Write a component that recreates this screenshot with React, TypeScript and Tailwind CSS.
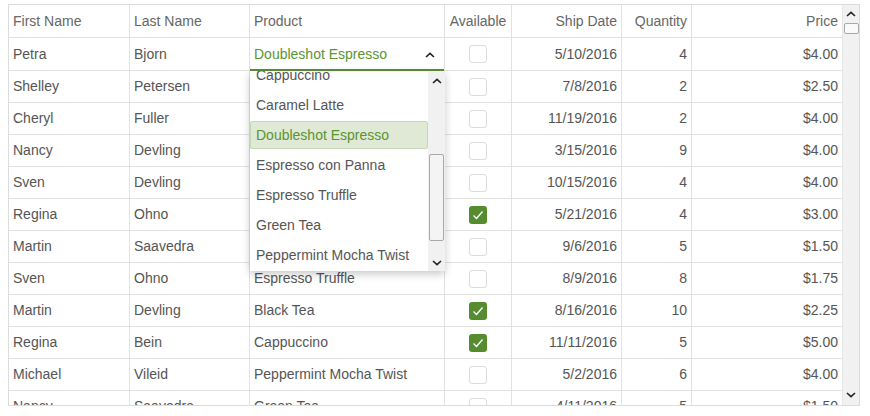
import React from 'react';

type Row = { first: string; last: string; product: string; available: boolean; date: string; qty: number; price: string };

const ROWS: Row[] = [
  { first: 'Petra',   last: 'Bjorn',    product: 'Doubleshot Espresso',    available: false, date: '5/10/2016',  qty: 4,  price: '$4.00' },
  { first: 'Shelley', last: 'Petersen', product: 'Caramel Latte',          available: false, date: '7/8/2016',   qty: 2,  price: '$2.50' },
  { first: 'Cheryl',  last: 'Fuller',   product: 'Green Tea',              available: false, date: '11/19/2016', qty: 2,  price: '$4.00' },
  { first: 'Nancy',   last: 'Devling',  product: 'Espresso con Panna',     available: false, date: '3/15/2016',  qty: 9,  price: '$4.00' },
  { first: 'Sven',    last: 'Devling',  product: 'Black Tea',              available: false, date: '10/15/2016', qty: 4,  price: '$4.00' },
  { first: 'Regina',  last: 'Ohno',     product: 'Cappuccino',             available: true,  date: '5/21/2016',  qty: 4,  price: '$3.00' },
  { first: 'Martin',  last: 'Saavedra', product: 'Caramel Latte',          available: false, date: '9/6/2016',   qty: 5,  price: '$1.50' },
  { first: 'Sven',    last: 'Ohno',     product: 'Espresso Truffle',       available: false, date: '8/9/2016',   qty: 8,  price: '$1.75' },
  { first: 'Martin',  last: 'Devling',  product: 'Black Tea',              available: true,  date: '8/16/2016',  qty: 10, price: '$2.25' },
  { first: 'Regina',  last: 'Bein',     product: 'Cappuccino',             available: true,  date: '11/11/2016', qty: 5,  price: '$5.00' },
  { first: 'Michael', last: 'Vileid',   product: 'Peppermint Mocha Twist', available: false, date: '5/2/2016',   qty: 6,  price: '$4.00' },
  { first: 'Nancy',   last: 'Saavedra', product: 'Green Tea',              available: false, date: '4/11/2016',  qty: 5,  price: '$1.50' },
];

const PRODUCTS = [
  'Cappuccino',
  'Caramel Latte',
  'Doubleshot Espresso',
  'Espresso con Panna',
  'Espresso Truffle',
  'Green Tea',
  'Peppermint Mocha Twist',
];

const COLS = 'grid grid-cols-[121px_120px_195px_67px_110px_70px_150px]';
const CELL = 'px-[4px] border-r border-b border-[#e2e2e2] flex items-center overflow-hidden whitespace-nowrap';

function Chevron({ up, className }: { up?: boolean; className?: string }) {
  return (
    <svg width="10" height="6" viewBox="0 0 10 6" className={className}>
      <polyline
        points={up ? '1,5 5,1.3 9,5' : '1,1 5,4.7 9,1'}
        fill="none"
        stroke="#222"
        strokeWidth="1.6"
      />
    </svg>
  );
}

function CheckBox({ checked }: { checked: boolean }) {
  if (checked) {
    return (
      <div className="w-[18px] h-[18px] rounded-[3px] bg-[#548c2f] flex items-center justify-center">
        <svg width="14" height="14" viewBox="0 0 14 14">
          <polyline points="2.5,7.5 5.5,10.5 11.5,3.5" fill="none" stroke="#fff" strokeWidth="1.4" />
        </svg>
      </div>
    );
  }
  return <div className="w-[18px] h-[18px] rounded-[3px] border border-[#dcdcdc] bg-white" />;
}

function Dropdown() {
  return (
    <div className="absolute left-0 top-full w-[195px] h-[200px] bg-white z-10 shadow-[0_3px_8px_rgba(0,0,0,0.22)] overflow-hidden flex">
      <div className="flex-1 overflow-hidden">
        <div className="-mt-[11px]">
          {PRODUCTS.map(p => {
            const sel = p === 'Doubleshot Espresso';
            return (
              <div key={p} className="h-[30px] py-px">
                <div
                  className={
                    sel
                      ? 'h-[28px] flex items-center pl-[5px] border border-[#c4d8b3] bg-[#dfe9d5] rounded-[2px] text-[#5b9431]'
                      : 'h-[28px] flex items-center pl-[6px] text-[#555]'
                  }
                >
                  {p}
                </div>
              </div>
            );
          })}
        </div>
      </div>
      <div className="w-[17px] bg-[#f1f1f1] flex flex-col items-center">
        <div className="h-[17px] flex items-center justify-center mt-px">
          <Chevron up />
        </div>
        <div className="mt-[65px] w-[15px] h-[87px] rounded-[2px] border border-[#a8a8a8] bg-[#f4f4f4]" />
        <div className="flex-1" />
        <div className="h-[17px] flex items-center justify-center">
          <Chevron />
        </div>
      </div>
    </div>
  );
}

export default function App() {
  return (
    <div
      className="pl-[8px] pt-[4px] bg-white text-[14px]"
      style={{ fontFamily: '"Liberation Sans", Arial, sans-serif' }}
    >
      <div className="w-[852px] h-[402px] border border-[#dcdcdc] flex overflow-hidden">
        <div className="w-[833px] h-[400px] overflow-hidden">
          {/* Header */}
          <div className={`${COLS} h-[33px] text-[#666]`}>
            <div className={CELL}>First Name</div>
            <div className={CELL}>Last Name</div>
            <div className={CELL}>Product</div>
            <div className={`${CELL} justify-center`}>Available</div>
            <div className={`${CELL} justify-end`}>Ship Date</div>
            <div className={`${CELL} justify-end`}>Quantity</div>
            <div className={`${CELL} justify-end border-r-0`}>Price</div>
          </div>

          {/* Rows */}
          {ROWS.map((r, i) => {
            const pad = i === 0 ? 'pt-px' : '';
            return (
              <div key={i} className={`${COLS} ${i === 0 ? 'h-[33px]' : 'h-[32px]'} text-[#555]`}>
                <div className={`${CELL} ${pad}`}>{r.first}</div>
                <div className={`${CELL} ${pad}`}>{r.last}</div>
                {i === 0 ? (
                  <div className="relative px-[4px] border-r border-[#e2e2e2] flex items-center">
                    <div className="absolute inset-x-0 bottom-0 h-[2px] bg-[#5a8f33]" />
                    <span className="flex-1 text-[#5b9431] whitespace-nowrap">{r.product}</span>
                    <Chevron up className="mr-[5px]" />
                    <Dropdown />
                  </div>
                ) : (
                  <div className={CELL}>{r.product}</div>
                )}
                <div className={`${CELL} justify-center`}>
                  <CheckBox checked={r.available} />
                </div>
                <div className={`${CELL} justify-end ${pad}`}>{r.date}</div>
                <div className={`${CELL} justify-end ${pad}`}>{r.qty}</div>
                <div className={`${CELL} justify-end border-r-0 ${pad}`}>{r.price}</div>
              </div>
            );
          })}
        </div>

        {/* Vertical scrollbar */}
        <div className="w-[17px] h-[400px] bg-[#f1f1f1] border-l border-[#e6e6e6] flex flex-col items-center">
          <div className="h-[15px] flex items-center justify-center mt-px">
            <Chevron up />
          </div>
          <div className="mt-[2px] w-[15px] h-[11px] rounded-[2px] border border-[#a8a8a8] bg-[#fafafa]" />
          <div className="flex-1" />
          <div className="h-[17px] flex items-center justify-center mb-[2px]">
            <Chevron />
          </div>
        </div>
      </div>
    </div>
  );
}
